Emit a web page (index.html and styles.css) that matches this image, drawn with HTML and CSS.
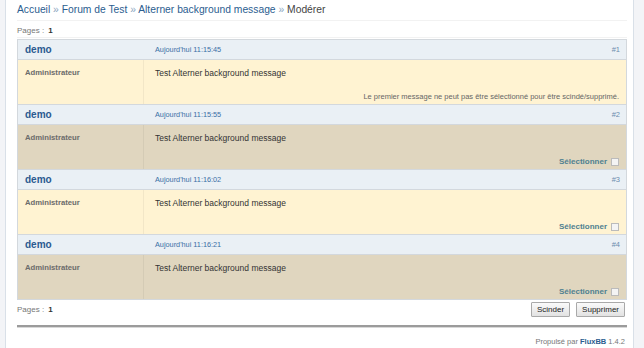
FILE: index.html
```html
<!DOCTYPE html>
<html lang="fr">
<head>
<meta charset="utf-8">
<title>Modérer</title>
<link rel="stylesheet" href="styles.css">
</head>
<body>
<div class="wrap">
  <div class="crumbs"><a href="#">Accueil</a> <span class="sep">»</span> <a href="#">Forum de Test</a> <span class="sep">»</span> <a href="#">Alterner background message</a> <span class="sep">»</span> <span class="cur">Modérer</span></div>
  <div class="pagebar top"><span class="pages">Pages : <strong>1</strong></span></div>

  <div class="posts">
  <div class="post odd">
    <div class="phead"><span class="author">demo</span><span class="time">Aujourd'hui 11:15:45</span><span class="num">#1</span></div>
    <div class="pbody"><div class="left">Administrateur</div><div class="right"><div class="msg">Test Alterner background message</div><div class="foot note">Le premier message ne peut pas être sélectionné pour être scindé/supprimé.</div></div></div>
  </div>
  <div class="post even">
    <div class="phead"><span class="author">demo</span><span class="time">Aujourd'hui 11:15:55</span><span class="num">#2</span></div>
    <div class="pbody"><div class="left">Administrateur</div><div class="right"><div class="msg">Test Alterner background message</div><div class="foot"><label class="sel">Sélectionner <span class="box"></span></label></div></div></div>
  </div>
  <div class="post odd">
    <div class="phead"><span class="author">demo</span><span class="time">Aujourd'hui 11:16:02</span><span class="num">#3</span></div>
    <div class="pbody"><div class="left">Administrateur</div><div class="right"><div class="msg">Test Alterner background message</div><div class="foot"><label class="sel">Sélectionner <span class="box"></span></label></div></div></div>
  </div>
  <div class="post even">
    <div class="phead"><span class="author">demo</span><span class="time">Aujourd'hui 11:16:21</span><span class="num">#4</span></div>
    <div class="pbody"><div class="left">Administrateur</div><div class="right"><div class="msg">Test Alterner background message</div><div class="foot"><label class="sel">Sélectionner <span class="box"></span></label></div></div></div>
  </div>
  </div>

  <div class="pagebar bottom"><span class="pages">Pages : <strong>1</strong></span><span class="buttons"><button class="btn">Scinder</button><button class="btn">Supprimer</button></span></div>
  <div class="rule"></div>
  <div class="powered">Propulsé par <a href="#">FluxBB</a> 1.4.2</div>
</div>
</body>
</html>
```
FILE: styles.css
```css
html, body { margin: 0; padding: 0; }
body {
  background: #f3f4f7;
  font-family: "Liberation Sans", Arial, sans-serif;
  color: #333;
}
.wrap {
  margin-left: 5px;
  width: 610px;
  min-height: 348px;
  background: #fff;
  border-left: 1px solid #d9e0e8;
  border-right: 1px solid #d9e0e8;
  padding: 0 6px 0 11px;
}
a { text-decoration: none; color: #2b5d8f; }
.crumbs {
  font-size: 10.3px;
  height: 20px;
  line-height: 19px;
  border-bottom: 1px solid #f2f2f2;
  color: #2b5d8f;
}
.crumbs .sep { color: #8aa6c0; }
.crumbs .cur { color: #444; }
.pagebar {
  display: flex;
  justify-content: space-between;
  align-items: center;
  font-size: 8px;
  color: #777;
}
.pagebar strong { color: #333; margin-left: 2px; }
.pagebar.top { height: 14px; padding-top: 2px; border-bottom: 1px solid #f2f2f2; margin-bottom: 1px; }
.pagebar.bottom { height: 15px; padding-top: 2px; }
.posts { border-top: 1px solid #d3d8dd; }
.post { border: 1px solid #d3d8dd; border-top: none; }
.phead {
  display: flex;
  align-items: center;
  height: 19px;
  background: #eaf0f5;
  border-bottom: 1px solid #d3d8dd;
  padding: 0 6px 0 7px;
}
.author { width: 130px; font-weight: bold; font-size: 10px; color: #2a5a90; }
.time { flex: 1; font-size: 7.3px; color: #3a6fa5; }
.num { font-size: 7.5px; color: #6a8cae; }
.pbody { display: flex; height: 44px; }
.odd .pbody { background: #fff3d2; }
.even .pbody { background: #e0d6bf; }
.left {
  width: 118px;
  padding: 8px 0 0 7px;
  font-size: 7.7px;
  font-weight: bold;
  color: #6b6b6b;
  border-right: 1px solid rgba(0,0,0,0.05);
}
.right { flex: 1; display: flex; flex-direction: column; padding: 8px 7px 3px 11px; }
.msg { font-size: 8.5px; color: #333; flex: 1; }
.foot { text-align: right; font-size: 7.5px; color: #666; }
.sel { font-size: 8px; font-weight: bold; color: #4f8090; display: inline-flex; align-items: center; gap: 4px; }
.box {
  display: inline-block;
  width: 6px; height: 6px;
  border: 1px solid #bbb;
  background: #f4f4f4;
}
.buttons { display: flex; gap: 6px; margin-right: 2px; }
.btn {
  font-family: "Liberation Sans", Arial, sans-serif;
  font-size: 8px;
  color: #222;
  height: 15px;
  padding: 0 5px;
  border: 1px solid #a9a9a9;
  border-radius: 1px;
  background: linear-gradient(#fafafa, #e2e2e2);
}
.rule {
  height: 2px;
  margin-top: 8px;
  background: #9b9b9b;
  box-shadow: 0 1px 0 #d8d8d8;
}
.powered {
  text-align: right;
  font-size: 7.5px;
  color: #777;
  padding: 10px 2px 0 0;
}
.powered a { font-weight: bold; color: #2b5d8f; }
```
